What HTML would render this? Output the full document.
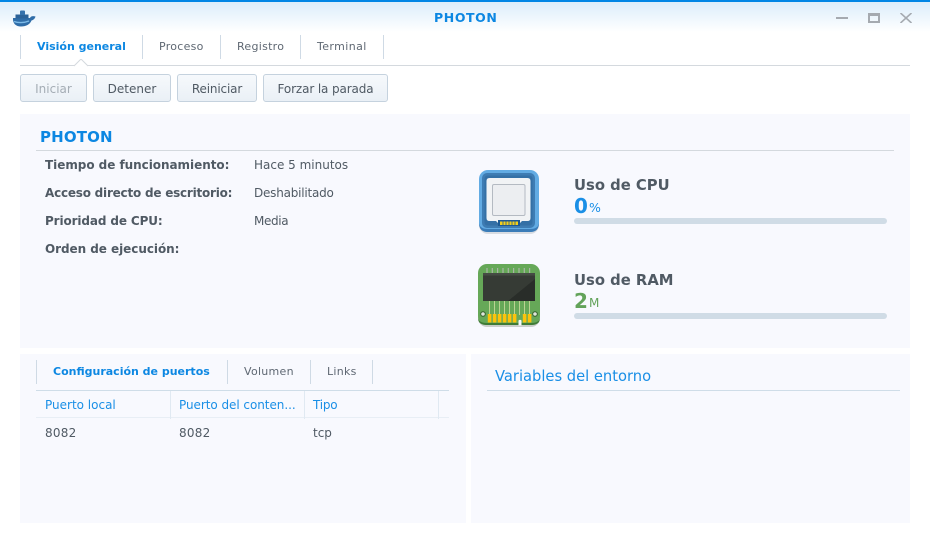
<!DOCTYPE html>
<html><head><meta charset="utf-8">
<style>
html,body{margin:0;padding:0;background:#fff}
#r{position:relative;width:930px;height:539px;overflow:hidden;background:#fff;font-family:"DejaVu Sans","Liberation Sans",sans-serif;font-size:12px;color:#505a64}
#r div{position:absolute}
.t{white-space:nowrap;line-height:16px}
.b{font-weight:bold}
.tab{background:#cfdae5;width:1px;height:24px}
.tb{font-size:11px;color:#5f6873;letter-spacing:.28px}
.btn{box-sizing:border-box;height:28px;top:74px;border:1px solid #c5d2de;border-radius:3px;background:linear-gradient(#f6f9fc,#eaf0f6);text-align:center;line-height:28px;font-size:12px;color:#505a64;white-space:nowrap}
.lb{color:#1a8fe6}
</style></head><body>
<div id="r">
<div style="left:0;top:0;width:930px;height:32px;background:linear-gradient(#d9ecfa,#ffffff)"></div>
<div style="left:0;top:0;width:930px;height:2px;background:#0086e5"></div>

<svg style="position:absolute;left:11px;top:8px" width="26" height="20" viewBox="0 0 26 20">
<path d="M2 10H19C19.500 8.500 21.500 7.500 24.500 8.500C24 10.500 22.500 12 20.500 12.500C19 16.500 15 18.500 10 18.500C5 18.500 1.500 15.500 2 10Z" fill="#2f6da8"/>
<rect x="4.500" y="6.500" width="13" height="4" fill="#2b6298"/>
<rect x="9" y="2.500" width="5" height="4.500" rx="1" fill="#3572ac"/>
<path d="M3 13.500C7 15 13 15 18 13" stroke="#7dbbe8" stroke-width="1.300" fill="none"/>
</svg>
<div class="t b" style="left:434px;top:10px;font-size:12.500px;color:#0c87e2;letter-spacing:.6px">PHOTON</div>

<div style="left:836px;top:17px;width:12px;height:2px;background:#a5aab0"></div>
<div style="box-sizing:border-box;left:868px;top:13px;width:12px;height:10px;border:2px solid #a5aab0;border-top-width:3px"></div>
<svg style="position:absolute;left:900px;top:13px" width="12" height="10" viewBox="0 0 12 10"><path d="M.5 0L11.500 10M11.500 0L.5 10" stroke="#a5aab0" stroke-width="1.600"/></svg>

<div class="tab" style="left:20px;top:35px"></div>
<div class="t b" style="left:37px;top:39px;font-size:11px;color:#0c87e2">Visión general</div>
<div class="tab" style="left:142px;top:35px"></div>
<div class="t tb" style="left:159px;top:39px">Proceso</div>
<div class="tab" style="left:220px;top:35px"></div>
<div class="t tb" style="left:237px;top:39px">Registro</div>
<div class="tab" style="left:300px;top:35px"></div>
<div class="t tb" style="left:317px;top:39px;letter-spacing:.4px">Terminal</div>
<div class="tab" style="left:383px;top:35px"></div>
<div style="left:20px;top:65px;width:890px;height:1px;background:#d4d9de"></div>
<svg style="position:absolute;left:74px;top:59px" width="14" height="8"><path d="M0 7L7 0L14 7" fill="#fff" stroke="#d4d9de"/></svg>

<div class="btn" style="left:20px;width:67px;color:#a5adb5">Iniciar</div>
<div class="btn" style="left:93px;width:78px">Detener</div>
<div class="btn" style="left:177px;width:80px;letter-spacing:-.15px">Reiniciar</div>
<div class="btn" style="left:263px;width:125px;letter-spacing:-.12px">Forzar la parada</div>

<div style="left:20px;top:114px;width:890px;height:234px;background:#f8f9fe"></div>
<div style="left:20px;top:354px;width:446px;height:169px;background:#f8f9fe"></div>
<div style="left:471px;top:354px;width:439px;height:169px;background:#f8f9fe"></div>

<div class="t b" style="left:40px;top:128px;font-size:15px;line-height:18px;color:#0c87e2;letter-spacing:.15px">PHOTON</div>
<div style="left:36px;top:150px;width:858px;height:1px;background:#d4d9de"></div>

<div class="t b" style="left:45px;top:157px;letter-spacing:-.04px">Tiempo de funcionamiento:</div>
<div class="t b" style="left:45px;top:185px;letter-spacing:-.22px">Acceso directo de escritorio:</div>
<div class="t b" style="left:45px;top:213px;letter-spacing:-.12px">Prioridad de CPU:</div>
<div class="t b" style="left:45px;top:241px;letter-spacing:-.05px">Orden de ejecución:</div>
<div class="t" style="left:254px;top:157px">Hace 5 minutos</div>
<div class="t" style="left:254px;top:185px;letter-spacing:-.22px">Deshabilitado</div>
<div class="t" style="left:254px;top:213px;letter-spacing:-.35px">Media</div>

<svg style="position:absolute;left:477px;top:168px" width="64" height="66" viewBox="0 0 64 66">
<rect x="2" y="5" width="60" height="61" rx="9" fill="#d8dce2"/>
<rect x="2" y="2" width="60" height="62" rx="9" fill="#62abe3"/>
<path d="M2 54V55Q2 64 11 64H53Q62 64 62 55V54Q62 61 53 61H11Q2 61 2 54Z" fill="#3b7cb8"/>
<rect x="5" y="5" width="53" height="55" rx="5" fill="#3e7cb3"/>
<rect x="7.500" y="7.500" width="48" height="50" rx="3" fill="#3470a6"/>
<path d="M9.500 13Q9.500 10 12.500 10H50.500Q53.500 10 53.500 13V50Q53.500 53 50.500 53H45L42 56H22L19 53H12.500Q9.500 53 9.500 50Z" fill="#f1f3f5"/>
<rect x="15.500" y="16.500" width="32.500" height="31" rx="1.500" fill="#eceef1" stroke="#b4bac2"/>
<rect x="21" y="52" width="22" height="6" fill="#1d5a93"/>
<rect x="23" y="53.500" width="18" height="3.500" fill="#f2cf1c"/>
<path d="M26 53.500v3.500M29 53.500v3.500M32 53.500v3.500M35 53.500v3.500M38 53.500v3.500" stroke="#1d5a93" stroke-width=".8"/>
</svg>

<svg style="position:absolute;left:476px;top:262px" width="66" height="66" viewBox="0 0 66 66">
<rect x="2" y="4" width="62" height="61" rx="9" fill="#c9cdc9"/>
<rect x="2" y="2" width="62" height="61" rx="9" fill="#66a858"/>
<path d="M2 56Q2 63 11 63H55Q64 63 64 56V55Q64 61 55 61H11Q2 61 2 55Z" fill="#3f7b36"/>
<path d="M11 6v5M16.300 6v5M21.600 6v5M27 6v5M32.300 6v5M37.600 6v5M43 6v5M48.300 6v5M53.600 6v5" stroke="#a8b5a4" stroke-width="1.200"/>
<rect x="7" y="11" width="52" height="28" fill="#2f342f"/>
<path d="M32 39L59 17V39Z" fill="#292d29"/>
<path d="M7 11H59V17L32 39H7Z" fill="#363b35"/>
<rect x="7" y="11" width="52" height="2.500" fill="#454c44"/>
<path d="M13.500 39v14M18.500 39v14M23.500 39v14M28.500 39v14M33.500 39v14M38.500 39v14M43.500 39v14M48.500 39v14M53.500 39v14" stroke="#c5d69a" stroke-width=".9"/>
<g fill="#fbc30a"><rect x="11.800" y="52" width="3.600" height="8.500"/><rect x="16.800" y="52" width="3.600" height="8.500"/><rect x="21.800" y="52" width="3.600" height="8.500"/><rect x="26.800" y="52" width="3.600" height="8.500"/><rect x="31.800" y="52" width="3.600" height="8.500"/><rect x="36.800" y="52" width="3.600" height="8.500"/><rect x="46.800" y="52" width="3.600" height="8.500"/><rect x="51.800" y="52" width="3.600" height="8.500"/></g>
<path d="M42.500 63.500V58.500Q44 57 45.500 58.500V63.500Z" fill="#f8f9fe"/>
<circle cx="7" cy="52" r="2.300" fill="#dfe6da" stroke="#35602c"/><circle cx="59" cy="52" r="2.300" fill="#dfe6da" stroke="#35602c"/>
</svg>

<div class="t b" style="left:574px;top:177px;font-size:14.800px;line-height:18px">Uso de CPU</div>
<div class="t b" style="left:574px;top:194px;font-size:20px;line-height:24px;color:#1a8fe6">0</div>
<div class="t" style="left:589px;top:200px;font-size:12.500px;color:#1a8fe6">%</div>
<div style="left:574px;top:218px;width:313px;height:6px;border-radius:3px;background:#d0dce6"></div>

<div class="t b" style="left:574px;top:272px;font-size:14.800px;line-height:18px">Uso de RAM</div>
<div class="t b" style="left:574px;top:289px;font-size:20px;line-height:24px;color:#63a35a">2</div>
<div class="t" style="left:589px;top:295px;font-size:12px;color:#63a35a">M</div>
<div style="left:574px;top:313px;width:313px;height:6px;border-radius:3px;background:#d0dce6"></div>

<div class="tab" style="left:36px;top:360px"></div>
<div class="t b" style="left:53px;top:364px;font-size:11px;color:#0c87e2">Configuración de puertos</div>
<div class="tab" style="left:227px;top:360px"></div>
<div class="t tb" style="left:244px;top:364px">Volumen</div>
<div class="tab" style="left:310px;top:360px"></div>
<div class="t tb" style="left:327px;top:364px">Links</div>
<div class="tab" style="left:372px;top:360px"></div>

<div style="left:36px;top:390px;width:413px;height:1px;background:#cfdde8"></div>
<div style="left:36px;top:417px;width:413px;height:1px;background:#e8eef5"></div>
<div style="left:170px;top:391px;width:1px;height:28px;background:#e0e9f2"></div>
<div style="left:304px;top:391px;width:1px;height:28px;background:#e0e9f2"></div>
<div style="left:438px;top:391px;width:1px;height:28px;background:#e0e9f2"></div>
<div class="t lb" style="left:45px;top:397px">Puerto local</div>
<div class="t lb" style="left:179px;top:397px;letter-spacing:-.05px">Puerto del conten...</div>
<div class="t lb" style="left:313px;top:397px;letter-spacing:-.2px">Tipo</div>
<div class="t" style="left:45px;top:425px;letter-spacing:.25px">8082</div>
<div class="t" style="left:179px;top:425px;letter-spacing:.25px">8082</div>
<div class="t" style="left:313px;top:425px">tcp</div>

<div class="t lb" style="left:495px;top:368px;font-size:14.700px;line-height:18px">Variables del entorno</div>
<div style="left:487px;top:390px;width:413px;height:1px;background:#cfdde8"></div>
</div>
</body></html>
